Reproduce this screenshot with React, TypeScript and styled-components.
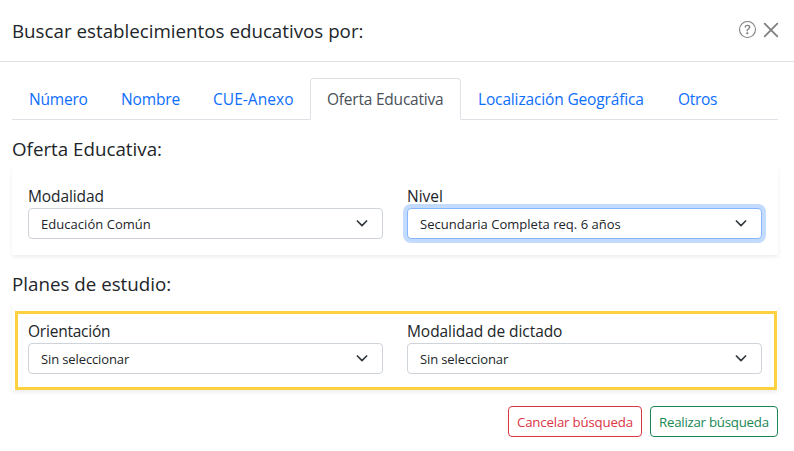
import React from "react";
import styled, { createGlobalStyle } from "styled-components";

const GlobalStyle = createGlobalStyle`
  *, *::before, *::after { box-sizing: border-box; }
  body {
    margin: 0;
    background: #fff;
    color: #212529;
    font-family: "Open Sans", "Noto Sans", sans-serif;
    font-size: 15.5px;
    line-height: 24px;
    overflow: hidden;
  }
`;

const Dialog = styled.div`
  display: flex;
  flex-direction: column;
  width: 794px;
  height: 451px;
  background: #fff;
`;

const Header = styled.header`
  display: flex;
  align-items: center;
  justify-content: space-between;
  height: 62px;
  padding: 0 15px 0 12px;
  border-bottom: 1px solid #dee2e6;
`;

const Title = styled.h5`
  margin: 0;
  font-size: 18.75px;
  font-weight: 400;
  line-height: 24px;
  white-space: nowrap;
`;

const HeaderActions = styled.div`
  display: flex;
  align-items: center;
  gap: 7px;
  height: 18px;
  margin-top: -2px;
  color: #7f7f7f;
`;

const IconButton = styled.button`
  display: flex;
  padding: 0;
  border: 0;
  background: none;
  color: inherit;
`;

const Body = styled.main`
  padding: 16px 16px 0 12px;
`;

const Tabs = styled.nav`
  display: flex;
  height: 42px;
  border-bottom: 1px solid #dee2e6;
`;

const Tab = styled.button<{ $active?: boolean; $width: number; $spacing: number }>`
  width: ${(p) => p.$width}px;
  height: 42px;
  padding: 0 0 0 16px;
  border: 1px solid;
  border-color: ${(p) => (p.$active ? "#dee2e6 #dee2e6 #fff" : "transparent")};
  border-radius: 4px 4px 0 0;
  background: ${(p) => (p.$active ? "#fff" : "transparent")};
  color: ${(p) => (p.$active ? "#495057" : "#0d6efd")};
  font: inherit;
  text-align: left;
  white-space: nowrap;
  letter-spacing: ${(p) => p.$spacing}px;
`;

const SectionTitle = styled(Title)`
  margin-top: 17px;
  margin-bottom: 6px;
`;

const Card = styled.section`
  height: 88px;
  box-shadow: 0 2px 4px rgba(0, 0, 0, 0.075);
`;

const Fields = styled.div<{ $highlighted?: boolean }>`
  display: grid;
  grid-template-columns: 355px 355px;
  column-gap: 24px;
  padding: 17px 16px 0;
  ${(p) =>
    p.$highlighted &&
    `
    width: 762px;
    height: 79px;
    padding: 5px 10px 0;
    border: 3px solid #ffd040;
    transform: translate(3px, 9px);
  `}
`;

const Field = styled.label<{ $spacing: number }>`
  display: block;
  line-height: 24px;
  letter-spacing: ${(p) => p.$spacing}px;
`;

const Select = styled.div<{ $focused?: boolean; $spacing: number }>`
  display: flex;
  align-items: center;
  justify-content: space-between;
  height: 31px;
  padding: 2px 12px 0 12px;
  border: 1px solid ${(p) => (p.$focused ? "#86b7fe" : "#ced4da")};
  border-radius: 4px;
  box-shadow: ${(p) => (p.$focused ? "0 0 0 4px rgba(13, 110, 253, 0.25)" : "none")};
  background: #fff;
  font-size: 13px;
  line-height: 21px;
  letter-spacing: ${(p) => p.$spacing}px;

  svg { margin-top: -3px; }
`;

const Footer = styled.footer`
  display: flex;
  justify-content: flex-end;
  gap: 8px;
  margin-top: 16px;
`;

const Button = styled.button<{ $color: string; $width: number; $spacing: number }>`
  width: ${(p) => p.$width}px;
  height: 31px;
  padding: 1px 0 0 8px;
  border: 1px solid ${(p) => p.$color};
  border-radius: 4px;
  background: #fff;
  color: ${(p) => p.$color};
  font: inherit;
  font-size: 13.3px;
  line-height: 21px;
  text-align: left;
  white-space: nowrap;
  letter-spacing: ${(p) => p.$spacing}px;
`;

const Chevron = () => (
  <svg width="16" height="12" viewBox="0 0 16 12" fill="none" stroke="#343a40" strokeWidth="1.7" strokeLinecap="round" strokeLinejoin="round">
    <path d="m3.4 4 4.6 4.6L12.6 4" />
  </svg>
);

const HelpIcon = () => (
  <svg width="17" height="17" viewBox="0 0 16 16" fill="currentColor">
    <path d="M8 15A7 7 0 1 1 8 1a7 7 0 0 1 0 14m0 1A8 8 0 1 0 8 0a8 8 0 0 0 0 16" />
    <path d="M5.255 5.786a.237.237 0 0 0 .241.247h.825c.138 0 .248-.113.266-.25.09-.656.54-1.134 1.342-1.134.686 0 1.314.343 1.314 1.168 0 .635-.374.927-.965 1.371-.673.489-1.206 1.06-1.168 1.987l.003.217a.25.25 0 0 0 .25.246h.811a.25.25 0 0 0 .25-.25v-.105c0-.718.273-.927 1.01-1.486.609-.463 1.244-.977 1.244-2.056 0-1.511-1.276-2.241-2.673-2.241-1.267 0-2.655.59-2.75 2.286m1.557 5.763c0 .533.425.927 1.01.927.609 0 1.028-.394 1.028-.927 0-.552-.42-.94-1.029-.94-.584 0-1.009.388-1.009.94" />
  </svg>
);

const CloseIcon = () => (
  <svg width="16" height="16" viewBox="0 0 16 16" fill="none" stroke="currentColor" strokeWidth="1.8" strokeLinecap="round">
    <path d="M1.7 1.7l12.6 12.6M14.3 1.7L1.7 14.3" />
  </svg>
);

const tabs = [
  { label: "Número", width: 92, spacing: -0.2 },
  { label: "Nombre", width: 92, spacing: -0.15 },
  { label: "CUE-Anexo", width: 114, spacing: 0.05 },
  { label: "Oferta Educativa", width: 151, spacing: -0.22, active: true },
  { label: "Localización Geográfica", width: 200, spacing: -0.15 },
  { label: "Otros", width: 73, spacing: -0.3 },
];

interface FieldProps {
  label: string;
  labelSpacing: number;
  value: string;
  valueSpacing: number;
  focused?: boolean;
}

const SelectField = ({ label, labelSpacing, value, valueSpacing, focused }: FieldProps) => (
  <Field $spacing={labelSpacing}>
    {label}
    <Select $focused={focused} $spacing={valueSpacing}>
      <span>{value}</span>
      <Chevron />
    </Select>
  </Field>
);

export default function App() {
  return (
    <>
      <GlobalStyle />
      <Dialog>
        <Header>
          <Title>Buscar establecimientos educativos por:</Title>
          <HeaderActions>
            <IconButton aria-label="Ayuda"><HelpIcon /></IconButton>
            <IconButton aria-label="Cerrar"><CloseIcon /></IconButton>
          </HeaderActions>
        </Header>
        <Body>
          <Tabs>
            {tabs.map((t) => (
              <Tab key={t.label} $active={t.active} $width={t.width} $spacing={t.spacing}>{t.label}</Tab>
            ))}
          </Tabs>
          <SectionTitle>Oferta Educativa:</SectionTitle>
          <Card>
            <Fields>
              <SelectField label="Modalidad" labelSpacing={-0.1} value="Educación Común" valueSpacing={0.04} />
              <SelectField label="Nivel" labelSpacing={0} value="Secundaria Completa req. 6 años" valueSpacing={0.02} focused />
            </Fields>
          </Card>
          <SectionTitle>Planes de estudio:</SectionTitle>
          <Card>
            <Fields $highlighted>
              <SelectField label="Orientación" labelSpacing={-0.22} value="Sin seleccionar" valueSpacing={-0.12} />
              <SelectField label="Modalidad de dictado" labelSpacing={-0.07} value="Sin seleccionar" valueSpacing={-0.12} />
            </Fields>
          </Card>
          <Footer>
            <Button $color="#dc3545" $width={134} $spacing={-0.2}>Cancelar búsqueda</Button>
            <Button $color="#198754" $width={128} $spacing={-0.26}>Realizar búsqueda</Button>
          </Footer>
        </Body>
      </Dialog>
    </>
  );
}
